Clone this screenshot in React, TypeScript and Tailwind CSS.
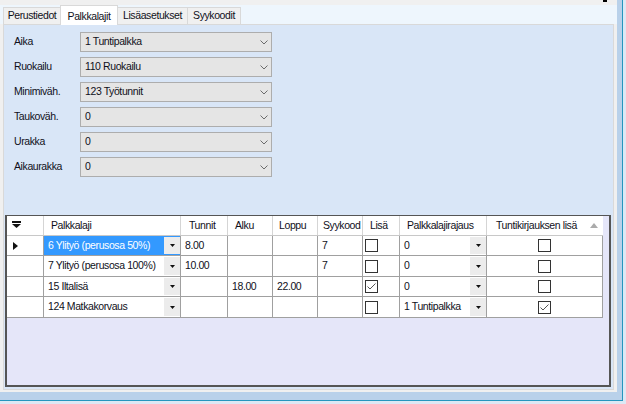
import React from "react";

type Row = {
  name: string;
  tunnit?: string;
  alku?: string;
  loppu?: string;
  syy?: string;
  lisa?: boolean;
  rajaus: string;
  tk?: boolean;
  selected?: boolean;
};

const fields = [
  { label: "Aika", value: "1 Tuntipalkka" },
  { label: "Ruokailu", value: "110 Ruokailu" },
  { label: "Minimiväh.", value: "123 Työtunnit" },
  { label: "Taukoväh.", value: "0" },
  { label: "Urakka", value: "0" },
  { label: "Aikaurakka", value: "0" },
];

const rows: Row[] = [
  { name: "6 Ylityö (perusosa 50%)", tunnit: "8.00", syy: "7", rajaus: "0", selected: true },
  { name: "7 Ylityö (perusosa 100%)", tunnit: "10.00", syy: "7", rajaus: "0" },
  { name: "15 Iltalisä", alku: "18.00", loppu: "22.00", lisa: true, rajaus: "0" },
  { name: "124 Matkakorvaus", rajaus: "1 Tuntipalkka", tk: true },
];

const Chevron = () => (
  <svg width="8" height="5" viewBox="0 0 8 5">
    <path d="M0.5 0.5 L4 4 L7.5 0.5" fill="none" stroke="#6b6b6b" strokeWidth="1" />
  </svg>
);

const Combo = ({ value }: { value: string }) => (
  <div className="flex h-[20px] w-[192px] items-center justify-between border border-[#adadad] bg-[#e5e5e5] pl-[4px] pr-[3px]">
    <span>{value}</span>
    <Chevron />
  </div>
);

const DropArrow = () => (
  <svg width="5" height="3" viewBox="0 0 5 3">
    <path d="M0 0 L5 0 L2.5 3 Z" fill="#111" />
  </svg>
);

const CheckBox = ({ checked }: { checked?: boolean }) => (
  <div className="flex h-[13px] w-[13px] items-center justify-center border border-[#333333] bg-white">
    {checked && (
      <svg width="11" height="11" viewBox="0 0 11 11">
        <path d="M1.5 5.5 L4 8 L9.5 2.5" fill="none" stroke="#555" strokeWidth="1" />
      </svg>
    )}
  </div>
);

const ComboCell = ({ text, width, selected }: { text: string; width: string; selected?: boolean }) => (
  <div
    className={`flex ${width} border-r border-[#a0a0a0] p-[1px] pr-0 ${
      selected ? "bg-[#3399ff] text-white" : "bg-white"
    }`}
  >
    <span className="flex flex-1 items-center pl-[3px]">{text}</span>
    <div className="flex w-[16px] items-center justify-center bg-[#ececec]">
      <DropArrow />
    </div>
  </div>
);

const TextCell = ({ text, width }: { text?: string; width: string }) => (
  <div className={`flex ${width} items-center border-r border-[#a0a0a0] bg-white pl-[4px]`}>{text}</div>
);

export default function App() {
  return (
    <div className="relative h-[404px] w-[626px] overflow-hidden bg-[#dde8f4] font-['Liberation_Sans',Arial,sans-serif] text-[10.5px] tracking-[-0.4px] text-[#10101a]">
      <div className="h-[401px] w-[623px] border-r border-b border-[#2596be] bg-[#b9d1ea]">
        <div className="flex h-[392px] w-[617px] flex-col bg-[#f0f0f0]">
          <div className="h-[5px]" />
          {/* tabs */}
          <div className="flex h-[19px] items-end bg-[#eef6fd] pl-[3px]">
            <div className="flex h-[17px] w-[57px] items-center justify-center border-t border-l border-[#d9d9d9] bg-[#f0f0f0]">
              Perustiedot
            </div>
            <div className="relative z-10 -mb-[1px] flex h-[20px] w-[58px] items-start justify-center border-x border-t border-[#d9d9d9] bg-white pt-[3px]">
              Palkkalajit
            </div>
            <div className="flex h-[17px] w-[70px] items-center justify-center border-t border-r border-[#d9d9d9] bg-[#f0f0f0]">
              Lisäasetukset
            </div>
            <div className="flex h-[17px] w-[53px] items-center justify-center border-t border-r border-[#d9d9d9] bg-[#f0f0f0]">
              Syykoodit
            </div>
          </div>

          {/* tab page */}
          <div className="ml-[3px] h-[366px] w-[611px] border border-[#d9d9d9] bg-[#d9e6f7]">
            <div className="flex flex-col gap-[5px] pt-[7px] pl-[10px]">
              {fields.map((f) => (
                <div key={f.label} className="flex items-center">
                  <span className="w-[66px]">{f.label}</span>
                  <Combo value={f.value} />
                </div>
              ))}
            </div>

            {/* grid */}
            <div className="mt-[38px] ml-[1px] h-[172px] w-[606px] border-t border-r-2 border-b-2 border-l-2 border-[#555555] bg-[#e5e6f9]">
              <div className="flex h-[20px] w-[596px] border-b border-[#c8c8c8] bg-white">
                <div className="w-[37px] border-r border-[#d5d5d5] pt-[5px] pl-[5px]">
                  <svg width="9" height="7" viewBox="0 0 9 7">
                    <rect x="0" y="0" width="9" height="2" fill="#111" />
                    <path d="M0 3 L9 3 L4.5 7 Z" fill="#111" />
                  </svg>
                </div>
                <div className="flex w-[137px] items-center border-r border-[#d5d5d5] pl-[7px]">Palkkalaji</div>
                <div className="flex w-[47px] items-center border-r border-[#d5d5d5] pl-[8px]">Tunnit</div>
                <div className="flex w-[45px] items-center border-r border-[#d5d5d5] pl-[7px]">Alku</div>
                <div className="flex w-[45px] items-center border-r border-[#d5d5d5] pl-[6px]">Loppu</div>
                <div className="flex w-[45px] items-center border-r border-[#d5d5d5] pl-[5px]">Syykood</div>
                <div className="flex w-[37px] items-center border-r border-[#d5d5d5] pl-[7px]">Lisä</div>
                <div className="flex w-[87px] items-center border-r border-[#d5d5d5] pl-[7px]">Palkkalajirajaus</div>
                <div className="flex w-[116px] items-center justify-between pr-[5px] pl-[9px]">
                  <span>Tuntikirjauksen lisä</span>
                  <svg width="8" height="5" viewBox="0 0 8 5">
                    <path d="M0 5 L8 5 L4 0 Z" fill="#ababab" />
                  </svg>
                </div>
              </div>

              {rows.map((r, i) => (
                <div
                  key={r.name}
                  className={`flex w-[596px] border-b border-[#a0a0a0] ${i % 2 === 0 ? "h-[20px]" : "h-[21px]"}`}
                >
                  <div className="flex w-[37px] items-center border-r border-[#a0a0a0] bg-white pl-[6px]">
                    {r.selected && (
                      <svg width="5" height="8" viewBox="0 0 5 8">
                        <path d="M0 0 L5 4 L0 8 Z" fill="#111" />
                      </svg>
                    )}
                  </div>
                  <ComboCell text={r.name} width="w-[137px]" selected={r.selected} />
                  <TextCell text={r.tunnit} width="w-[47px]" />
                  <TextCell text={r.alku} width="w-[45px]" />
                  <TextCell text={r.loppu} width="w-[45px]" />
                  <TextCell text={r.syy} width="w-[45px]" />
                  <div className="flex w-[37px] items-center border-r border-[#a0a0a0] bg-white pl-[2px]">
                    <CheckBox checked={r.lisa} />
                  </div>
                  <ComboCell text={r.rajaus} width="w-[87px]" />
                  <div className="flex w-[116px] items-center justify-center border-r border-[#a0a0a0] bg-white">
                    <CheckBox checked={r.tk} />
                  </div>
                </div>
              ))}
            </div>
          </div>
        </div>
      </div>
      <div className="absolute top-0 left-[603px] h-[2px] w-[4px] bg-black" />
    </div>
  );
}
